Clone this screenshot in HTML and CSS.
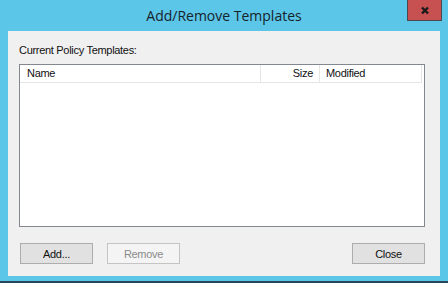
FILE: index.html
```html
<!DOCTYPE html>
<html lang="en">
<head>
    <title>Add/Remove Templates</title>
    <link rel="stylesheet" href="styles.css">
</head>
<body>
    <!-- dialog window -->
    <div class="window">
        <div class="titlebar">
            <span class="title">Add/Remove Templates</span>
            <div class="close-btn">
                <svg width="10" height="9" viewBox="0 0 10 9">
                    <path d="M2 1.5 L8 7.5 M8 1.5 L2 7.5" stroke="#1a1a1a" stroke-width="2.4" fill="none"/>
                </svg>
            </div>
        </div>
        <div class="client">
            <div class="caption">Current Policy Templates:</div>
            <div class="listbox">
                <div class="list-header">
                    <div class="col col-name">Name</div>
                    <div class="col col-size">Size</div>
                    <div class="col col-modified">Modified</div>
                </div>
            </div>
            <div class="buttons">
                <button class="btn">Add...</button>
                <button class="btn" disabled>Remove</button>
                <span class="spacer"></span>
                <button class="btn">Close</button>
            </div>
        </div>
    </div>
</body>
</html>
```

FILE: styles.css
```css
body {
    margin: 0;
    padding: 0;
    font-family: "Liberation Sans", Arial, sans-serif;
    font-size: 11px;
    letter-spacing: -0.3px;
    color: #111;
}

.window {
    width: 448px;
    height: 283px;
    box-sizing: border-box;
    background-color: #5cc6e8;
    border-bottom: 2px solid #24485a;
    padding: 0 8px 5px 8px;
    display: flex;
    flex-direction: column;
}

.titlebar {
    position: relative;
    height: 31px;
    display: flex;
    align-items: center;
    justify-content: center;
}

.title {
    font-family: "Open Sans", "Noto Sans", sans-serif;
    font-size: 14px;
    letter-spacing: 0;
    color: #15232b;
    margin-top: -1px;
}

.close-btn {
    position: absolute;
    top: 0;
    right: -2px;
    width: 33px;
    height: 20px;
    background-color: #c75050;
    border: 1px solid #4a4a52;
    border-top: none;
    display: flex;
    align-items: center;
    justify-content: center;
}

.client {
    flex: 1;
    background-color: #f0f0f0;
    padding: 13px 15px 0 11px;
    display: flex;
    flex-direction: column;
}

.caption {
    line-height: 13px;
    height: 13px;
    margin-bottom: 7px;
}

.listbox {
    height: 163px;
    box-sizing: border-box;
    background-color: #fff;
    border: 1px solid #828790;
    padding-right: 2px;
}

.list-header {
    display: flex;
    height: 17px;
    border-bottom: 1px solid #e5e5e5;
}

.col {
    line-height: 17px;
    box-sizing: border-box;
    border-right: 1px solid #e5e5e5;
}

.col-name {
    width: 241px;
    padding-left: 7px;
}

.col-size {
    width: 59px;
    text-align: right;
    padding-right: 6px;
}

.col-modified {
    flex: 1;
    padding-left: 6px;
}

.buttons {
    display: flex;
    margin-top: 16px;
    padding-left: 1px;
    gap: 14px;
}

.spacer {
    flex: 1;
}

.btn {
    width: 73px;
    height: 21px;
    font-family: "Liberation Sans", Arial, sans-serif;
    font-size: 11px;
    letter-spacing: -0.3px;
    color: #111;
    background-color: #e1e1e1;
    border: 1px solid #adadad;
    border-radius: 0;
    padding: 0;
}

.btn:disabled {
    background-color: #f4f4f4;
    border-color: #c4c4c4;
    color: #8b8b8b;
}
```
